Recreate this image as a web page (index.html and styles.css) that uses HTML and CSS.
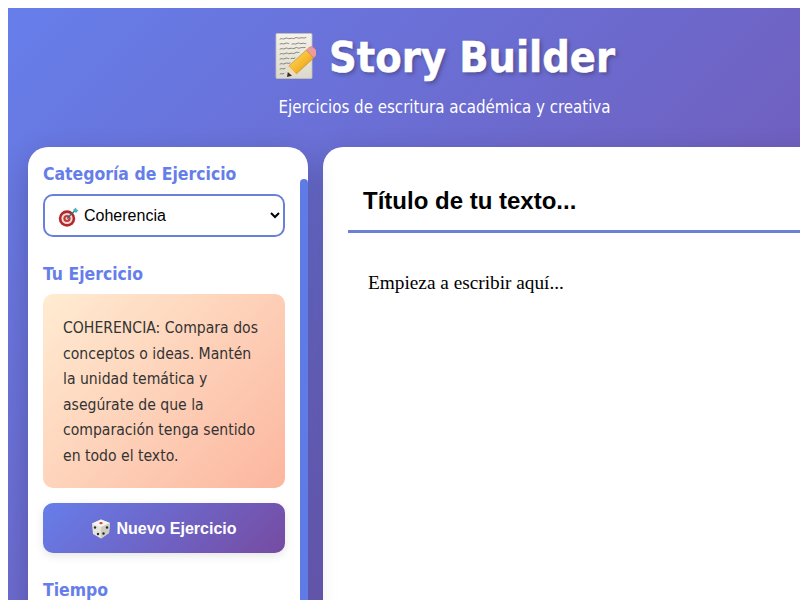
FILE: index.html
```html
<!DOCTYPE html>
<html lang="es">
<head>
<meta charset="utf-8">
<title>Story Builder</title>
<link rel="stylesheet" href="styles.css">
</head>
<body>
<div class="app">
  <header class="header">
    <h1 class="title">
      <svg class="title-icon" viewBox="0 0 42 46" aria-hidden="true">
        <defs>
          <linearGradient id="paper" x1="0" y1="0" x2="0" y2="1"><stop offset="0" stop-color="#f4f2ea"/><stop offset="1" stop-color="#dcd9cc"/></linearGradient>
          <linearGradient id="pen" x1="0" y1="0" x2="1" y2="1"><stop offset="0" stop-color="#fde06a"/><stop offset="0.55" stop-color="#f5b82e"/><stop offset="1" stop-color="#d98a14"/></linearGradient>
        </defs>
        <rect x="2" y="0.5" width="36" height="45" rx="1" fill="url(#paper)" stroke="#c4c1b3" stroke-width="0.8"/>
        <g fill="none" stroke="#5a5850" stroke-width="0.7" stroke-linecap="round">
          <path d="M6 6c2-1.5 3 1 5-.5s3 1 5 0 3 1 5-.5 3 1 5 0 4 1 6-.5"/>
          <path d="M6 11c2-1.5 3 1 5-.5s3 1 4 0m3 .5c2-1 3 1 5-.5s3 1 5 0 3 1 4 0"/>
          <path d="M6 16c2-1.5 3 1 5-.5s3 1 5 0 3 1 5-.5 3 1 5 0 3 0 5-.5"/>
          <path d="M6 21c2-1.5 3 1 5-.5s3 1 5 0 3 1 5-.5 3 0 4-.5"/>
          <path d="M6 26c2-1.5 3 1 5-.5s3 1 4 0m2 0c2-1 2 1 4-.5"/>
          <path d="M6 31c2-1.5 3 1 5-.5s3 1 5-.5"/>
          <path d="M6 36c2-1.5 3 1 5-.5"/>
          <path d="M6 41c1-1.5 2 1 4-.5"/>
        </g>
        <path d="M18.5 37 L14.8 33 L32.3 17 L39.7 25 L22.2 41 Z" fill="url(#pen)" stroke="#b8791a" stroke-width="0.5"/>
        <path d="M32.3 17 L35 14.5 Q37.5 12.5 40 15 L42 17 Q44 20 42 22.5 L39.7 25 Z" fill="#ec9c9c" stroke="#c77272" stroke-width="0.5"/>
        <path d="M13 44 L14.8 33 L22.2 41 Z" fill="#efdcb8"/>
        <path d="M13 44 L13.8 39 L18 42.8 Z" fill="#2f2f2f"/>
      </svg>
      <span>Story Builder</span>
    </h1>
    <p class="subtitle">Ejercicios de escritura académica y creativa</p>
  </header>
  <div class="workspace">
    <aside class="sidebar">
      <div class="thumb"></div>
      <h3 class="label">Categoría de Ejercicio</h3>
      <div class="select-wrap">
        <svg class="target-icon" viewBox="0 0 21 20" aria-hidden="true">
          <circle cx="9" cy="11.5" r="8.2" fill="#b3282c"/>
          <circle cx="9" cy="11.5" r="5.6" fill="#f0dcd6"/>
          <circle cx="9" cy="11.5" r="3.6" fill="#c8383a"/>
          <circle cx="9" cy="11.5" r="1.4" fill="#f0dcd6"/>
          <path d="M9 11.5 L17 3.5" stroke="#3d6b70" stroke-width="1.2"/>
          <path d="M15 3 L18 0.5 L18.5 2.5 L20.5 3 L18 6 Z" fill="#3fb4bd"/>
        </svg>
        <select class="select"><option>Coherencia</option></select>
      </div>
      <h3 class="label label-gap">Tu Ejercicio</h3>
      <div class="exercise">COHERENCIA: Compara dos conceptos o ideas. Mantén la unidad temática y asegúrate de que la comparación tenga sentido en todo el texto.</div>
      <button class="new-btn">
        <svg class="dice-icon" viewBox="0 0 20 20" aria-hidden="true">
          <path d="M10 0.5 L19 4 L18 14 L10 19.5 L2 15 L1 4.5 Z" fill="#e6e3da"/>
          <path d="M10 0.5 L19 4 L10 8 L1 4.5 Z" fill="#f7f5ef"/>
          <path d="M10 8 L19 4 L18 14 L10 19.5 Z" fill="#cfccc2"/>
          <ellipse cx="10" cy="4.2" rx="1.7" ry="1.1" fill="#d8433a"/>
          <circle cx="4" cy="8.5" r="1.2" fill="#2b2b2b"/>
          <circle cx="7" cy="15" r="1.2" fill="#2b2b2b"/>
          <circle cx="12.5" cy="14.5" r="1.2" fill="#2b2b2b"/>
          <circle cx="16" cy="8.5" r="1.2" fill="#2b2b2b"/>
        </svg>
        <span>Nuevo Ejercicio</span>
      </button>
      <h3 class="label label-gap2">Tiempo</h3>
    </aside>
    <main class="editor">
      <div class="doc-title">Título de tu texto...</div>
      <div class="doc-body">Empieza a escribir aquí...</div>
    </main>
  </div>
</div>
</body>
</html>
```
FILE: styles.css
```css
html { overflow: hidden; height: 100%; }
body { margin: 8px 0 0 8px; height: 592px; overflow: hidden; background: #fff; font-family: "DejaVu Sans", sans-serif; font-stretch: condensed; }
.app { width: 873px; height: 700px; background: linear-gradient(135deg, #667eea 0%, #764ba2 100%); padding: 0 20px; box-sizing: border-box; }
.header { text-align: center; padding-top: 21px; color: #fff; height: 139px; box-sizing: border-box; }
.title { display: flex; justify-content: center; align-items: center; gap: 13px; margin: 0; font-size: 42.8px; line-height: 56px; font-weight: 700; text-shadow: 2px 2px 4px rgba(0,0,0,.3); -webkit-text-stroke: .5px #fff; }
.title-icon { width: 42px; height: 46px; flex: none; margin-top: -3px; }
.subtitle { margin: 10px 0 0; font-size: 16.75px; line-height: 24px; }
.workspace { display: flex; gap: 15px; height: 560px; }
.sidebar { position: relative; width: 280px; flex: none; background: #fff; border-radius: 20px 20px 0 0; padding: 16px 15px 15px; box-sizing: border-box; overflow: hidden; box-shadow: 0 10px 30px rgba(0,0,0,.2); }
.thumb { position: absolute; left: 272px; top: 32px; width: 8px; height: 500px; background: #5f7be6; border-radius: 4px; }
.label { margin: 0 0 9px; color: #667eea; font-size: 17.45px; line-height: 22px; font-weight: 700; }
.label-gap { margin-top: 26px; }
.label-gap2 { margin-top: 26px; }
.select-wrap { position: relative; width: 242px; height: 43px; }
.target-icon { position: absolute; left: 15px; top: 13px; width: 21px; height: 20px; }
.select { display: block; width: 100%; height: 100%; box-sizing: border-box; border: 2px solid #6a80d8; border-radius: 10px; background: #fff; padding: 0 10px 0 35px; font-family: "Liberation Sans", sans-serif; font-size: 16px; color: #000; }
.exercise { width: 242px; box-sizing: border-box; padding: 22px 20px 19px; border-radius: 10px; background: linear-gradient(135deg, #ffecd2 0%, #fcb69f 100%); color: #333; font-size: 15.6px; line-height: 25.5px; }
.new-btn { display: flex; justify-content: center; align-items: center; gap: 5px; width: 242px; height: 50px; margin-top: 15px; padding: 2px 0 0; border: 0; border-radius: 10px; background: linear-gradient(135deg, #667eea 0%, #764ba2 100%); color: #fff; font-family: "Liberation Sans", sans-serif; font-size: 16px; font-weight: 700; box-shadow: 0 3px 10px rgba(0,0,0,.1); }
.dice-icon { width: 20px; height: 20px; flex: none; }
.editor { flex: 1; background: #fff; border-radius: 20px 20px 0 0; padding: 25px; box-sizing: border-box; box-shadow: 0 10px 30px rgba(0,0,0,.2); }
.doc-title { border-bottom: 3px solid #6a7fd8; padding: 15px; font-family: "Liberation Sans", sans-serif; font-size: 24px; line-height: 28px; font-weight: 700; color: #000; }
.doc-body { padding: 38px 20px; font-family: "Liberation Serif", serif; font-size: 19.3px; line-height: 24px; color: #000; }
```
